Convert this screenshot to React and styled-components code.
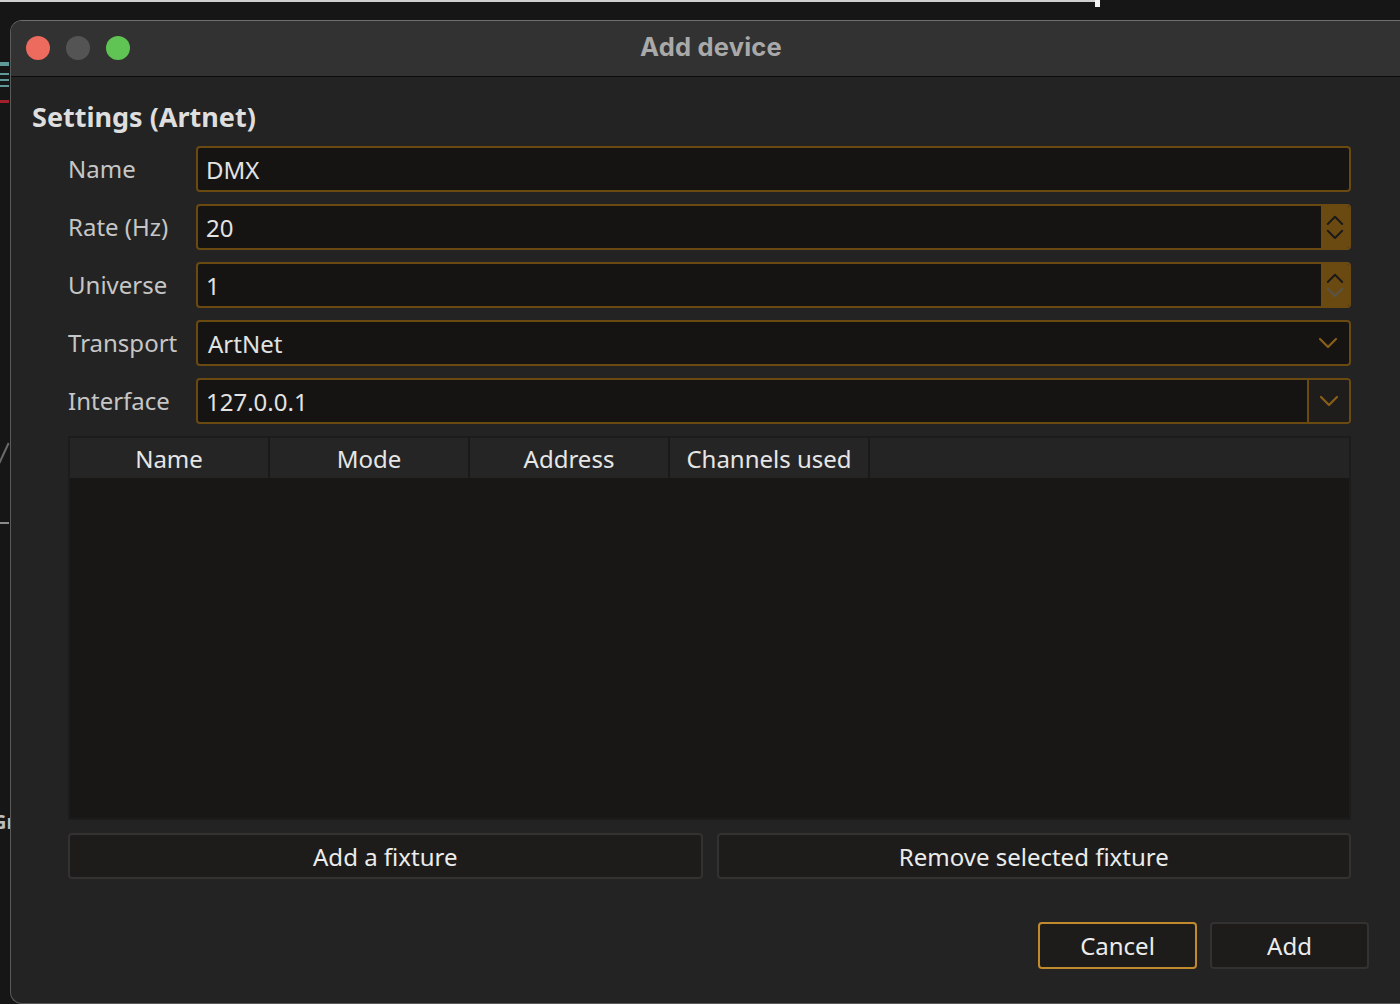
import React from "react";
import styled, { createGlobalStyle, css } from "styled-components";

const UI_FONT = `"Noto Sans", "Open Sans", sans-serif`;
const TITLE_FONT = `Inter, Roboto, "Liberation Sans", sans-serif`;
const ORANGE = "#6b4a12";

const GlobalStyle = createGlobalStyle`
  html, body {
    margin: 0;
    padding: 0;
    background: #141414;
    overflow: hidden;
  }
  * {
    box-sizing: border-box;
  }
`;

const Desktop = styled.div`
  position: relative;
  width: 1400px;
  height: 1004px;
  overflow: hidden;
  background: #161616;
  padding: 20px 0 0 10px;
`;

const TopLine = styled.div`
  position: absolute;
  top: 0;
  left: 0;
  width: 1100px;
  height: 2px;
  background: #d0d0d0;
  &::after {
    content: "";
    position: absolute;
    right: 0;
    top: 0;
    width: 5px;
    height: 7px;
    background: #f2f2f2;
  }
`;

const Peek = styled.div`
  position: absolute;
  left: 0;
  width: 9px;
  height: ${({ h }) => h}px;
  top: ${({ y }) => y}px;
  background: ${({ color }) => color};
`;

const PeekSlash = styled.div`
  position: absolute;
  left: 3px;
  top: 442px;
  width: 2px;
  height: 22px;
  background: #6a6a6a;
  transform: rotate(25deg);
`;

const PeekText = styled.div`
  position: absolute;
  left: -8px;
  top: 808px;
  font-family: ${UI_FONT};
  font-weight: 700;
  font-size: 20px;
  color: #bdbdbd;
`;

const Window = styled.div`
  position: relative;
  width: 1420px;
  height: 984px;
  border: 1px solid #5a5a5a;
  border-top-color: #6e6e6e;
  border-right: none;
  border-radius: 12px 12px 0 12px;
  background: #232323;
  overflow: hidden;
  display: flex;
  flex-direction: column;
`;

const TitleBar = styled.div`
  position: relative;
  height: 56px;
  flex: none;
  background: #323232;
  border-bottom: 1px solid #0c0c0c;
  display: flex;
  align-items: center;
  padding: 0 0 2px 15px;
  gap: 16px;
`;

const Light = styled.span`
  width: 24px;
  height: 24px;
  border-radius: 50%;
  background: ${({ color }) => color};
`;

const WindowTitle = styled.div`
  position: absolute;
  left: 0;
  top: 12px;
  width: 1400px;
  text-align: center;
  font-family: ${TITLE_FONT};
  font-weight: 700;
  font-size: 25.5px;
  line-height: 28px;
  color: #a9a9a9;
  letter-spacing: 0.2px;
`;

const Body = styled.div`
  width: 1358px;
  padding: 22px 0 0 21px;
  display: flex;
  flex-direction: column;
  font-family: ${UI_FONT};
`;

const Heading = styled.div`
  font-weight: 700;
  font-size: 27px;
  line-height: 36px;
  color: #dedede;
  margin-bottom: 11px;
`;

const Group = styled.div`
  margin: 0 18px 0 36px;
  display: flex;
  flex-direction: column;
`;

const Form = styled.div`
  display: grid;
  grid-template-columns: 128px 1fr;
  row-gap: 12px;
  align-items: center;
`;

const Label = styled.div`
  font-size: 24px;
  color: #c6c6c6;
  line-height: 46px;
`;

const Field = styled.div`
  position: relative;
  height: 46px;
  display: flex;
  align-items: stretch;
  border: 2px solid ${ORANGE};
  border-radius: 4px;
  background: #151413;
  overflow: hidden;
`;

const FieldText = styled.div`
  flex: 1;
  display: flex;
  align-items: center;
  padding-left: ${({ pad }) => pad || 8}px;
  font-size: 24px;
  color: #e2e2e2;
`;

const SpinButtons = styled.div`
  width: 28px;
  flex: none;
  background: ${ORANGE};
  display: flex;
  flex-direction: column;
  align-items: center;
  justify-content: center;
  gap: 3px;
`;

const ComboArrow = styled.div`
  width: ${({ w }) => w}px;
  flex: none;
  display: flex;
  align-items: center;
  justify-content: center;
  ${({ split }) =>
    split &&
    css`
      border-left: 2px solid ${ORANGE};
      background: #1e1d1c;
    `}
`;

const Chevron = ({ up, color, size = 20 }) => (
  <svg width={size} height={size * 0.6} viewBox="0 0 20 12" fill="none">
    <polyline
      points={up ? "2,10 10,2 18,10" : "2,2 10,10 18,2"}
      stroke={color}
      strokeWidth="2.2"
      strokeLinecap="round"
      strokeLinejoin="round"
    />
  </svg>
);

const Table = styled.div`
  margin-top: 12px;
  height: 384px;
  border: 2px solid #1c1c1c;
  background: #181716;
  display: flex;
  flex-direction: column;
`;

const HeaderRow = styled.div`
  height: 40px;
  display: flex;
  background: #242424;
`;

const HeaderCell = styled.div`
  width: 200px;
  flex: none;
  display: flex;
  align-items: center;
  justify-content: center;
  font-size: 24px;
  color: #e6e6e6;
  background: #252525;
  border-right: 2px solid #1a1a1a;
`;

const ActionRow = styled.div`
  margin-top: 13px;
  display: grid;
  grid-template-columns: 1fr 1fr;
  gap: 14px;
`;

const Button = styled.div`
  height: ${({ h }) => h || 46}px;
  display: flex;
  align-items: center;
  justify-content: center;
  font-size: 24px;
  color: #ececec;
  background: #1d1c1b;
  border: 2px solid ${({ primary }) => (primary ? "#c18a2c" : "#333231")};
  border-radius: 4px;
  ${({ w }) =>
    w &&
    css`
      width: ${w}px;
    `}
`;

const Footer = styled.div`
  margin-top: 43px;
  display: flex;
  justify-content: flex-end;
  gap: 13px;
`;

const rows = [
  { label: "Name", value: "DMX", kind: "text" },
  { label: "Rate (Hz)", value: "20", kind: "spin" },
  { label: "Universe", value: "1", kind: "spin", downDisabled: true },
  { label: "Transport", value: "ArtNet", kind: "combo" },
  { label: "Interface", value: "127.0.0.1", kind: "editcombo" },
];

const columns = ["Name", "Mode", "Address", "Channels used"];

const FormField = ({ value, kind, downDisabled }) => (
  <Field>
    <FieldText pad={kind === "combo" ? 10 : 8}>{value}</FieldText>
    {kind === "spin" && (
      <SpinButtons>
        <Chevron up color="#1b1a18" size={18} />
        <Chevron color={downDisabled ? "#58544c" : "#1b1a18"} size={18} />
      </SpinButtons>
    )}
    {kind === "combo" && (
      <ComboArrow w={42}>
        <Chevron color="#8a5e18" size={20} />
      </ComboArrow>
    )}
    {kind === "editcombo" && (
      <ComboArrow w={42} split>
        <Chevron color="#8a5e18" size={20} />
      </ComboArrow>
    )}
  </Field>
);

export default function App() {
  return (
    <>
      <GlobalStyle />
      <Desktop>
        <TopLine />
        <Peek y={62} h={4} color="#5e9a9a" />
        <Peek y={73} h={2} color="#5e9a9a" />
        <Peek y={79} h={2} color="#5e9a9a" />
        <Peek y={85} h={2} color="#5e9a9a" />
        <Peek y={100} h={3} color="#a3202a" />
        <Peek y={522} h={2} color="#8a8a8a" />
        <PeekSlash />
        <PeekText>Gr</PeekText>
        <Window>
          <TitleBar>
            <Light color="#ec6a5e" />
            <Light color="#545454" />
            <Light color="#5fc454" />
            <WindowTitle>Add device</WindowTitle>
          </TitleBar>
          <Body>
            <Heading>Settings (Artnet)</Heading>
            <Group>
              <Form>
                {rows.map((row) => (
                  <React.Fragment key={row.label}>
                    <Label>{row.label}</Label>
                    <FormField {...row} />
                  </React.Fragment>
                ))}
              </Form>
              <Table>
                <HeaderRow>
                  {columns.map((c) => (
                    <HeaderCell key={c}>{c}</HeaderCell>
                  ))}
                </HeaderRow>
              </Table>
              <ActionRow>
                <Button>Add a fixture</Button>
                <Button>Remove selected fixture</Button>
              </ActionRow>
            </Group>
            <Footer>
              <Button primary w={159} h={47}>
                Cancel
              </Button>
              <Button w={159} h={47}>
                Add
              </Button>
            </Footer>
          </Body>
        </Window>
      </Desktop>
    </>
  );
}
